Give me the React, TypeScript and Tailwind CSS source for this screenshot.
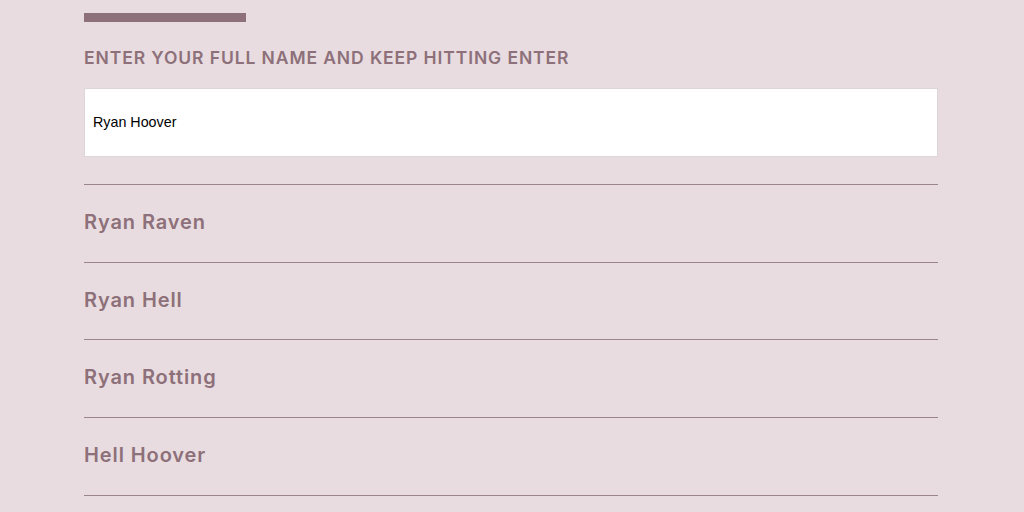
import React from "react";

const names = ["Ryan Raven", "Ryan Hell", "Ryan Rotting", "Hell Hoover"];

export default function App() {
  return (
    <div className="w-[1024px] h-[512px] overflow-hidden bg-[#e8dce0]" style={{ fontFamily: "Inter, 'Open Sans', sans-serif" }}>
      <div className="ml-[84px] w-[854px] flex flex-col">
        <div className="mt-[13px] w-[162px] h-[9px] bg-[#8d7079]" />
        <div className="mt-[15px] h-[42px] flex items-center text-[17.5px] font-semibold uppercase text-[#8d7079] tracking-[0.9px]">
          Enter your full name and keep hitting enter
        </div>
        <div className="mt-[9px] h-[69px] bg-white border border-[#dcd6d8] flex items-center pl-[8px] text-[14.3px] text-black" style={{ fontFamily: "'Liberation Sans', Arial, sans-serif" }}>
          Ryan Hoover
        </div>
        <div className="mt-[27px] flex flex-col">
          {names.map((n) => (
            <div key={n} className="h-[77.7px] border-t border-[#9c848b] flex items-center pb-[3px] text-[20px] font-semibold text-[#8d7079] tracking-[0.9px]">
              {n}
            </div>
          ))}
          <div className="border-t border-[#9c848b]" />
        </div>
      </div>
    </div>
  );
}
